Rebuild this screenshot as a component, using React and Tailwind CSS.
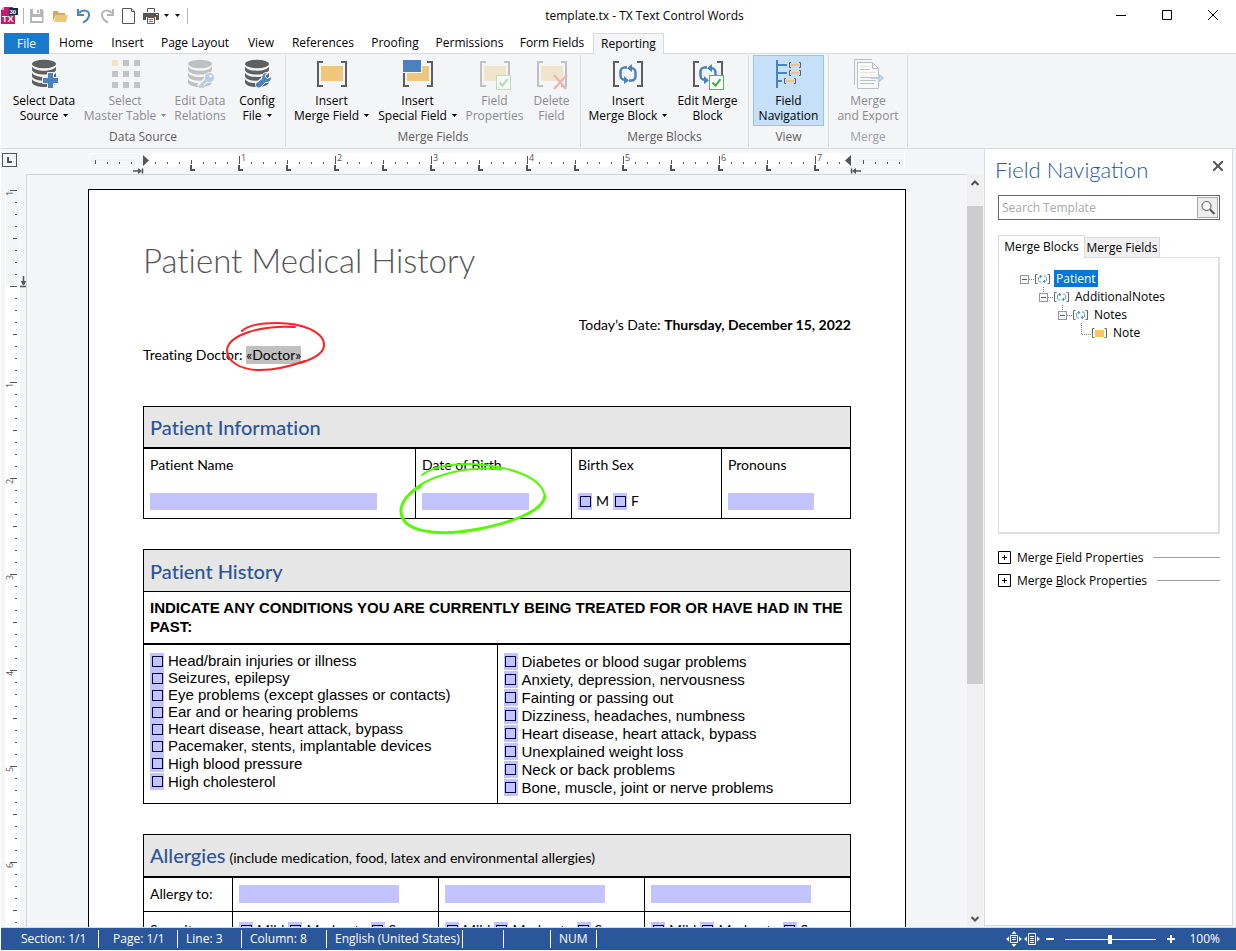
import React from 'react';

const uiFont = "font-['Open_Sans','Noto_Sans',sans-serif]";
const docFont = "font-['Lato','Open_Sans',sans-serif] [font-variant-ligatures:none]";

/* ---------- ribbon icons ---------- */

const Svg = ({ children, faded }) => (
  <svg width="32" height="32" viewBox="0 0 32 32" className={faded ? 'opacity-35' : ''} aria-hidden="true">
    {children}
  </svg>
);

const Database = () => (
  <g fill="#5f5f5f">
    <ellipse cx="16" cy="6" rx="12" ry="4.2" />
    <path d="M4 8.5c2 3.4 7 4.2 12 4.2s10-.8 12-4.2v3.8c-1.500 3.200-7 4.300-12 4.300s-10.500-1.100-12-4.300z" />
    <path d="M4 14.700c2 3.400 7 4.200 12 4.200s10-.8 12-4.200v3.800c-1.500 3.200-7 4.300-12 4.300s-10.500-1.100-12-4.300z" />
    <path d="M4 20.900c2 3.400 7 4.200 12 4.200s10-.8 12-4.200v3.800c-1.500 3.200-7 4.300-12 4.300s-10.500-1.100-12-4.300z" />
  </g>
);

const Brackets = () => (
  <path d="M7 4H2v24h5M25 4h5v24h-5" fill="none" stroke="#5f5f5f" strokeWidth="2" />
);

const CheckBadge = () => (
  <g>
    <rect x="17.500" y="17.500" width="14" height="14" fill="#fff" stroke="#58b553" />
    <path d="M20.500 24.500l3 3.200 5-6.500" fill="none" stroke="#3fae3a" strokeWidth="2" />
  </g>
);

const LoopArrows = () => (
  <g fill="none" stroke="#4a82bd" strokeWidth="2.500">
    <path d="M15 9.500h-2.500a4 4 0 0 0-4 4v4a4.500 4.500 0 0 0 4.500 4.500" />
    <path d="M17 22.500h2.500a4 4 0 0 0 4-4v-4a4.500 4.500 0 0 0-4.500-4.500" />
    <path d="M12 18v8l5-3.600zM20 6v8l-5-3.800z" fill="#4a82bd" stroke="none" />
  </g>
);

const SelectDataIcon = () => (
  <Svg>
    <Database />
    <path d="M19.500 14.500h6v5h5v6h-5v5h-6v-5h-5v-6h5z" fill="#4a82bd" stroke="#f4f5f7" />
  </Svg>
);

const TableIcon = () => (
  <Svg>
    {[2, 13, 24].map((y) =>
      [3, 14, 25].map((x) => (
        <rect key={`${x}-${y}`} x={x} y={y} width="6" height="6" fill={x === 3 && y === 2 ? '#f3e4c5' : '#c2c3c5'} />
      ))
    )}
  </Svg>
);

const RelationsIcon = () => (
  <Svg faded>
    <Database />
    <path d="M15 29l8-8" stroke="#f4f5f7" strokeWidth="6" />
    <circle cx="25.500" cy="19.500" r="5" fill="#4a82bd" stroke="#f4f5f7" />
    <path d="M15 29.500l8-8M17 27l3 2.500" stroke="#4a82bd" strokeWidth="2.500" />
    <circle cx="26.500" cy="18" r="1.500" fill="#fff" />
  </Svg>
);

const ConfigIcon = () => (
  <Svg>
    <Database />
    <path d="M16 28l9-8" stroke="#f4f5f7" strokeWidth="7" />
    <path
      d="M15 28.500c-1.500-2 0-3.500 1.500-4.500l4.500-3.500c-.8-3 1.500-6.500 5.500-6l-2.500 3.500 2 2.500 4.500-2c.5 4-2.500 6.500-6 6l-4.500 4.500c-1.800 1.600-3.700 1.200-5-.5z"
      fill="#4a82bd"
      stroke="#f4f5f7"
    />
  </Svg>
);

const MergeFieldIcon = () => (
  <Svg>
    <Brackets />
    <rect x="5" y="8" width="22" height="15" fill="#eec77d" />
  </Svg>
);

const SpecialFieldIcon = () => (
  <Svg>
    <path d="M7 28H2V15M25 4h5v24h-5" fill="none" stroke="#5f5f5f" strokeWidth="2" />
    <rect x="5" y="8" width="22" height="15" fill="#eec77d" />
    <rect x="0" y="1" width="20" height="14" fill="#f4f5f7" />
    <rect x="1" y="2" width="18" height="12" fill="#4a82bd" />
  </Svg>
);

const FieldPropsIcon = () => (
  <Svg faded>
    <Brackets />
    <rect x="5" y="8" width="22" height="15" fill="#eec77d" />
    <CheckBadge />
  </Svg>
);

const DeleteFieldIcon = () => (
  <Svg faded>
    <Brackets />
    <rect x="5" y="8" width="22" height="15" fill="#eec77d" />
    <path d="M18 17l12 14M31 17L18 31" stroke="#e0452f" strokeWidth="2.500" />
  </Svg>
);

const MergeBlockIcon = () => (
  <Svg>
    <Brackets />
    <LoopArrows />
  </Svg>
);

const EditBlockIcon = () => (
  <Svg>
    <Brackets />
    <LoopArrows />
    <CheckBadge />
  </Svg>
);

const NavigationIcon = () => (
  <Svg>
    <path d="M4 2v28M5 7h9M5 15h9M5 23h4" fill="none" stroke="#4a82bd" strokeWidth="2" />
    <path
      d="M18 4.500h-1.500v5H18M26 4.500h1.500v5H26M18 12.500h-1.500v5H18M26 12.500h1.500v5H26M13 20.500h-1.500v5H13M21 20.500h1.500v5H21"
      fill="none"
      stroke="#5f5f5f"
    />
    <path d="M18 7h8M18 15h8M13 23h8" stroke="#eec77d" strokeWidth="2" />
  </Svg>
);

const ExportIcon = () => (
  <Svg faded>
    <path d="M2.500 27V1.500H20" fill="none" stroke="#5f5f5f" />
    <path d="M5.500 4.500h15l6 6v20h-21z" fill="#fff" stroke="#5f5f5f" />
    <path d="M20.500 4.500v6h6" fill="none" stroke="#5f5f5f" />
    <path d="M8 11.500h10M8 19.500h16M8 22.500h16M8 25.500h14" stroke="#5f5f5f" />
    <path d="M8 8.500h10M8 14.500h16" stroke="#eec77d" />
    <path d="M19 20h9M26 16l4.500 4-4.500 4" fill="none" stroke="#4a82bd" strokeWidth="2" />
  </Svg>
);

const Caret = () => (
  <svg width="5" height="3" viewBox="0 0 5 3" className="ml-[5px] shrink-0" aria-hidden="true">
    <path d="M0 0h5L2.500 3z" fill="currentColor" />
  </svg>
);

/* ---------- ribbon data ---------- */

const tabs = [
  { name: 'Home', width: 'w-[54px]' },
  { name: 'Insert', width: 'w-[49px]' },
  { name: 'Page Layout', width: 'w-[86px]' },
  { name: 'View', width: 'w-[46px]' },
  { name: 'References', width: 'w-[78px]' },
  { name: 'Proofing', width: 'w-[66px]' },
  { name: 'Permissions', width: 'w-[83px]' },
  { name: 'Form Fields', width: 'w-[82px]' },
];

const groups = [
  {
    label: 'Data Source',
    items: [
      { lines: ['Select Data', 'Source'], icon: SelectDataIcon, menu: true, width: 'w-[78px]' },
      { lines: ['Select', 'Master Table'], icon: TableIcon, menu: true, disabled: true, width: 'w-[84px]' },
      { lines: ['Edit Data', 'Relations'], icon: RelationsIcon, disabled: true, width: 'w-[66px]' },
      { lines: ['Config', 'File'], icon: ConfigIcon, menu: true, width: 'w-[48px]' },
    ],
  },
  {
    label: 'Merge Fields',
    items: [
      { lines: ['Insert', 'Merge Field'], icon: MergeFieldIcon, menu: true, width: 'w-[83px]' },
      { lines: ['Insert', 'Special Field'], icon: SpecialFieldIcon, menu: true, width: 'w-[89px]' },
      { lines: ['Field', 'Properties'], icon: FieldPropsIcon, disabled: true, width: 'w-[65px]' },
      { lines: ['Delete', 'Field'], icon: DeleteFieldIcon, disabled: true, width: 'w-[49px]' },
    ],
  },
  {
    label: 'Merge Blocks',
    items: [
      { lines: ['Insert', 'Merge Block'], icon: MergeBlockIcon, menu: true, width: 'w-[86px]' },
      { lines: ['Edit Merge', 'Block'], icon: EditBlockIcon, width: 'w-[73px]' },
    ],
  },
  {
    label: 'View',
    items: [{ lines: ['Field', 'Navigation'], icon: NavigationIcon, active: true, width: 'w-[71px]' }],
  },
  {
    label: 'Merge',
    disabled: true,
    items: [{ lines: ['Merge', 'and Export'], icon: ExportIcon, disabled: true, width: 'w-[70px]' }],
  },
];

const RibbonButton = ({ item }) => {
  const Icon = item.icon;
  return (
    <button
      type="button"
      disabled={item.disabled}
      className={`flex h-[71px] flex-col items-center border pt-[2px] text-xs leading-[15px] whitespace-nowrap ${item.width} ${
        item.active ? 'border-[#92c6f2] bg-[#c5e0f8]' : 'border-transparent'
      } ${item.disabled ? 'text-[#8b8c8e]' : 'text-black'}`}
    >
      <Icon />
      <span className="mt-[3px]">{item.lines[0]}</span>
      <span className="flex items-center">
        {item.lines[1]}
        {item.menu && <Caret />}
      </span>
    </button>
  );
};

const Ribbon = () => (
  <div className="flex h-[95px] shrink-0 border-b border-[#d9dadc] bg-[#f4f5f7]">
    {groups.map((group) => (
      <section key={group.label} className="my-px flex flex-col border-r border-[#d9dadc] px-1">
        <div className="flex">
          {group.items.map((item) => (
            <RibbonButton key={item.lines.join(' ')} item={item} />
          ))}
        </div>
        <h2 className={`mt-[3px] text-center text-xs leading-4 ${group.disabled ? 'text-[#a0a1a3]' : 'text-[#5c5d5f]'}`}>
          {group.label}
        </h2>
      </section>
    ))}
  </div>
);

/* ---------- title bar ---------- */

const TitleBar = () => (
  <header className="relative flex h-[33px] shrink-0 items-center justify-between pb-[2px]">
    <div className="flex items-center">
      <svg width="17" height="17" viewBox="0 0 17 17" aria-label="TX Text Control">
        <path d="M0 3l3-3h9v17H0z" fill="#c8186f" />
        <path d="M9 7h5v10H9z" fill="#c8186f" />
        <path d="M0 3h3V0z" fill="#f3a3c8" />
        <rect x="8" y="1" width="9" height="7" fill="#14294f" />
        <text x="8.500" y="7" fontSize="6" fontWeight="700" fill="#fff" fontFamily="Liberation Sans, sans-serif">30</text>
        <text x="1" y="15" fontSize="9" fontWeight="700" fill="#fff" fontFamily="Liberation Sans, sans-serif">TX</text>
      </svg>
      <span className="ml-[5px] h-4 w-px bg-[#b5b5b5]" />
      <button type="button" aria-label="Save" className="ml-[6px]">
        <svg width="14" height="14" viewBox="0 0 14 14">
          <path d="M0 0h12l1.500 1.500V14H0z" fill="#b5b5b5" />
          <path d="M3 0h7v5H3zM2 8h10v4H2z" fill="#fff" />
          <path d="M7 1h2v3H7z" fill="#b5b5b5" />
        </svg>
      </button>
      <button type="button" aria-label="Open" className="ml-[9px]">
        <svg width="15" height="14" viewBox="0 0 15 14">
          <path d="M0 12V2h5l1 2h6v2H3z" fill="#d3a861" />
          <path d="M3 6h12l-2 7H1z" fill="#eec77d" />
        </svg>
      </button>
      <button type="button" aria-label="Undo" className="ml-[9px]">
        <svg width="14" height="16" viewBox="0 0 14 16" fill="none" stroke="#4a82bd" strokeWidth="2">
          <path d="M2 5c4-4 10-3 10 2 0 4-3 6-6 7.500" />
          <path d="M1 1v6h6" />
        </svg>
      </button>
      <button type="button" aria-label="Redo" className="ml-[9px]">
        <svg width="14" height="16" viewBox="0 0 14 16" fill="none" stroke="#b5b5b5" strokeWidth="2">
          <path d="M12 5C8 1 2 2 2 7c0 4 3 6 6 7.500" />
          <path d="M13 1v6H7" />
        </svg>
      </button>
      <button type="button" aria-label="New" className="ml-2">
        <svg width="13" height="16" viewBox="0 0 13 16" fill="#fff" stroke="#555">
          <path d="M.5.5h9l3 3v12H.5z" />
          <path d="M9.500.5v3h3" />
        </svg>
      </button>
      <button type="button" aria-label="Print" className="ml-2 flex items-center">
        <svg width="16" height="16" viewBox="0 0 16 16">
          <path d="M0 5h16v7h-3V9H3v3H0z" fill="#555" />
          <path d="M4.500 4V.5h7V4M4.500 9.500v6h7v-6z" fill="#fff" stroke="#555" />
          <path d="M6 11.500h4M6 13.500h4" stroke="#4a82bd" />
          <path d="M13 6h2v1h-2z" fill="#fff" />
        </svg>
        <Caret />
      </button>
      <button type="button" aria-label="Customize toolbar" className="flex pl-px">
        <Caret />
      </button>
      <span className="ml-[7px] h-4 w-px bg-[#b5b5b5]" />
    </div>
    <h1 className="absolute inset-x-0 pl-[52px] text-center text-xs">template.tx - TX Text Control Words</h1>
    <div className="relative flex">
      <button type="button" aria-label="Minimize" className="flex h-[30px] w-[46px] items-center justify-center">
        <svg width="11" height="11" viewBox="0 0 11 11" stroke="#000"><path d="M0 5.500h10" /></svg>
      </button>
      <button type="button" aria-label="Maximize" className="flex h-[30px] w-[46px] items-center justify-center">
        <svg width="11" height="11" viewBox="0 0 11 11" stroke="#000" fill="none"><path d="M.5.5h9v9h-9z" /></svg>
      </button>
      <button type="button" aria-label="Close" className="flex h-[30px] w-[46px] items-center justify-center">
        <svg width="11" height="11" viewBox="0 0 11 11" stroke="#000"><path d="M0 0l10 10M10 0L0 10" /></svg>
      </button>
    </div>
  </header>
);

const TabStrip = () => (
  <nav className="flex h-[21px] shrink-0 text-xs whitespace-nowrap">
    <button type="button" className="ml-[3px] w-[45px] bg-[#1979ca] text-white">File</button>
    {tabs.map((tab) => (
      <button key={tab.name} type="button" className={`border-b border-[#d9dadc] ${tab.width}`}>
        {tab.name}
      </button>
    ))}
    <button type="button" className="w-[71px] border-x border-t border-[#d9dadc] bg-[#f4f5f7]">Reporting</button>
    <span className="flex-1 border-b border-[#d9dadc]" />
  </nav>
);

/* ---------- rulers ---------- */

const HorizontalRuler = () => {
  const ticks = [];
  for (let x = 7, i = -4; x < 815; x += 12, i += 1) {
    if (i === 0 || i === 59) continue;
    if (i % 8 === 0) ticks.push(`M${x}.5 6v8`);
    else if (i % 4 === 0) ticks.push(`M${x}.5 10v4`);
    else ticks.push(`M${x}.5 12v2`);
  }
  const stops = [];
  for (let x = 103; x < 760; x += 48) stops.push(`M${x} 15v5h4`);
  return (
    <svg width="818" height="24" viewBox="0 0 818 24" className="shrink-0" aria-hidden="true">
      <rect x="1" y="3" width="816" height="14" fill="#fff" />
      <rect x="2" y="4" width="53" height="12" fill="#f4f5f7" />
      <rect x="763" y="4" width="53" height="12" fill="#f4f5f7" />
      <path d={ticks.join('')} stroke="#555" />
      <path d={stops.join('')} fill="none" stroke="#555" strokeWidth="2" />
      {[1, 2, 3, 4, 5, 6, 7].map((n) => (
        <text key={n} x={57 + n * 96} y="11" fontSize="9" fill="#555" fontFamily="Open Sans, sans-serif">{n}</text>
      ))}
      <path d="M55 5l6 5.500-6 5.500zM763 5l-6 5.500 6 5.500z" fill="#555" />
      <path d="M45 21h7M54.500 18.500v5M763.500 18.500v5M766 21h7" stroke="#555" strokeWidth="1.500" />
      <path d="M50 18l4 3-4 3zM768 18l-4 3 4 3z" fill="#555" />
    </svg>
  );
};

const VerticalRuler = () => {
  const ticks = [];
  for (let y = 16, i = -8; y < 1000; y += 12, i += 1) {
    if (i % 8 === 0) ticks.push(`M9 ${y}.5h7`);
    else if (i % 4 === 0) ticks.push(`M12 ${y}.5h4`);
    else ticks.push(`M14 ${y}.5h2`);
  }
  return (
    <div className="w-[25px] shrink-0 overflow-hidden">
      <svg width="25" height="1000" viewBox="0 0 25 1000" aria-hidden="true">
        <rect x="4" y="16" width="15" height="984" fill="#fff" />
        <rect x="5" y="16" width="13" height="96" fill="#f4f5f7" />
        <path d={ticks.join('')} stroke="#555" />
        {[-1, 1, 2, 3, 4, 5, 6].map((n) => (
          <text
            key={n}
            transform={`translate(12 ${110 + n * 96 + 8}) rotate(-90)`}
            fontSize="9"
            fill="#555"
            fontFamily="Open Sans, sans-serif"
          >
            {Math.abs(n)}
          </text>
        ))}
        <path d="M22.500 102v9M19 112.500h7" stroke="#555" strokeWidth="1.500" />
        <path d="M19.500 107h6l-3 4.500z" fill="#555" />
      </svg>
    </div>
  );
};

/* ---------- document ---------- */

const leftConditions = [
  'Head/brain injuries or illness',
  'Seizures, epilepsy',
  'Eye problems (except glasses or contacts)',
  'Ear and or hearing problems',
  'Heart disease, heart attack, bypass',
  'Pacemaker, stents, implantable devices',
  'High blood pressure',
  'High cholesterol',
];

const rightConditions = [
  'Diabetes or blood sugar problems',
  'Anxiety, depression, nervousness',
  'Fainting or passing out',
  'Dizziness, headaches, numbness',
  'Heart disease, heart attack, bypass',
  'Unexplained weight loss',
  'Neck or back problems',
  'Bone, muscle, joint or nerve problems',
];

const CheckField = ({ label, className = '' }) => (
  <label className={`flex items-center ${className}`}>
    <span className="mr-1 flex h-[17px] w-[14px] shrink-0 items-center justify-center bg-[#c3c3ff]">
      <input type="checkbox" className="h-[11px] w-[11px] appearance-none border border-[#000040] checked:bg-[#000040]" />
    </span>
    {label}
  </label>
);

const cell = 'border border-black px-[6px] text-left align-top font-normal';
const headCell = 'border border-black bg-[#e6e6e6] px-[6px] text-left text-xl font-medium text-[#2b5597]';

const PatientInformation = () => (
  <table className="mt-[42px] w-full table-fixed border-collapse">
    <colgroup>
      <col className="w-[272px]" />
      <col className="w-[156px]" />
      <col className="w-[150px]" />
      <col />
    </colgroup>
    <thead>
      <tr className="h-[41px]">
        <th colSpan="4" className={`${headCell} border-b-2`}>Patient Information</th>
      </tr>
    </thead>
    <tbody>
      <tr className="h-[71px]">
        <td className={cell}>
          <label htmlFor="patient-name" className="mt-[7px] block">Patient Name</label>
          <input id="patient-name" className="mt-[19px] block h-[17px] w-[227px] bg-[#c3c3ff]" />
        </td>
        <td className={cell}>
          <label htmlFor="birth-date" className="mt-[7px] block">Date of Birth</label>
          <div className="relative mt-[19px]">
            <input id="birth-date" className="block h-[17px] w-[107px] bg-[#c3c3ff]" />
            <svg
              width="150"
              height="76"
              viewBox="0 0 150 76"
              className="pointer-events-none absolute -top-[33px] -left-6 max-w-none"
              fill="none"
              stroke="#59f70a"
              strokeLinecap="round"
              aria-hidden="true"
            >
              <path d="M24 15c12-9 28-11 46-11 40 1 76 13 77 34" strokeWidth="2" />
              <path d="M147 36c-2 16-36 27-66 33-42 8-78 3-78-18 0-9 8-18 20-25" strokeWidth="3" />
              <path d="M10 36C22 19 62 5 103 9.500" strokeWidth="2" />
            </svg>
          </div>
        </td>
        <td className={cell}>
          <p className="mt-[7px]">Birth Sex</p>
          <div className="mt-[19px] flex gap-1">
            <CheckField label="M" className="h-[17px]" />
            <CheckField label="F" className="h-[17px]" />
          </div>
        </td>
        <td className={cell}>
          <label htmlFor="pronouns" className="mt-[7px] block">Pronouns</label>
          <input id="pronouns" className="mt-[19px] block h-[17px] w-[86px] bg-[#c3c3ff]" />
        </td>
      </tr>
    </tbody>
  </table>
);

const PatientHistory = () => (
  <table className="mt-[30px] w-full table-fixed border-collapse">
    <thead>
      <tr className="h-[42px]">
        <th colSpan="2" className={headCell}>Patient History</th>
      </tr>
    </thead>
    <tbody className="font-['Liberation_Sans',Arial,sans-serif] text-[15px]">
      <tr className="h-[52px]">
        <th colSpan="2" className="border border-b-2 border-black px-[6px] pt-[6px] text-left align-top leading-[19px] font-bold">
          INDICATE ANY CONDITIONS YOU ARE CURRENTLY BEING TREATED FOR OR HAVE HAD IN THE PAST:
        </th>
      </tr>
      <tr className="h-40">
        <td className={`${cell} pt-2`}>
          {leftConditions.map((name, i) => (
            <CheckField key={name} label={name} className={i < 6 ? 'h-[17px]' : 'h-[18px]'} />
          ))}
        </td>
        <td className={`${cell} pt-2`}>
          {rightConditions.map((name) => (
            <CheckField key={name} label={name} className="h-[18px]" />
          ))}
        </td>
      </tr>
    </tbody>
  </table>
);

const Allergies = () => (
  <table className="mt-[30px] w-full table-fixed border-collapse">
    <colgroup>
      <col className="w-[89px]" />
      <col className="w-[206px]" />
      <col className="w-[206px]" />
      <col />
    </colgroup>
    <thead>
      <tr className="h-[42px]">
        <th colSpan="4" className={`${headCell} border-b-2`}>
          Allergies
          <span className="ml-1 text-sm font-normal text-black">
            (include medication, food, latex and environmental allergies)
          </span>
        </th>
      </tr>
    </thead>
    <tbody>
      <tr className="h-[35px]">
        <th className={`${cell} pt-[7px]`}>Allergy to:</th>
        {[1, 2, 3].map((n) => (
          <td key={n} className={`${cell} pt-[7px]`}>
            <input aria-label={`Allergy ${n}`} className="block h-[18px] w-[160px] bg-[#c3c3ff]" />
          </td>
        ))}
      </tr>
      <tr className="h-[35px]">
        <th className={`${cell} pt-[9px]`}>Severity:</th>
        {[1, 2, 3].map((n) => (
          <td key={n} className={`${cell} pt-[9px]`}>
            <div className="flex gap-1">
              <CheckField label="Mild" />
              <CheckField label="Moderate" />
              <CheckField label="Severe" />
            </div>
          </td>
        ))}
      </tr>
    </tbody>
  </table>
);

const DocumentPage = () => (
  <article className={`mx-auto mt-[14px] w-[818px] border border-black bg-white px-[54px] pb-24 text-sm leading-[18px] ${docFont}`}>
    <h1 className="pt-[46px] text-[33px] leading-[48px] font-light text-[#555]">Patient Medical History</h1>
    <p className="mt-8 text-right">
      Today’s Date: <b>Thursday, December 15, 2022</b>
    </p>
    <p className="mt-3">
      Treating Doctor:{' '}
      <span className="relative inline-block bg-[#c0c0c0]">
        «Doctor»
        <svg
          width="102"
          height="54"
          viewBox="0 0 102 54"
          className="pointer-events-none absolute -top-[26px] -left-[21px] max-w-none"
          fill="none"
          stroke="#fb2323"
          strokeLinecap="round"
          aria-hidden="true"
        >
          <path d="M17 11C23 5 37 3 52 3c26 0 47 9 47 22 0 9-14 15-24 18" strokeWidth="2" />
          <path d="M80 41c-14 5-31 9-45 9-19 0-33-8-33-20C3 16 33 5 70 7" strokeWidth="2" />
        </svg>
      </span>
    </p>
    <PatientInformation />
    <PatientHistory />
    <Allergies />
  </article>
);

const Scrollbar = () => (
  <div className="flex w-[17px] shrink-0 flex-col items-center border-r border-[#f4f5f7] bg-[#f0f0f0]">
    <button type="button" aria-label="Scroll up" className="flex h-8 items-start pt-[6px]">
      <svg width="8" height="6" viewBox="0 0 8 6" fill="none" stroke="#555" strokeWidth="2"><path d="M.5 5L4 1.500 7.500 5" /></svg>
    </button>
    <div className="flex w-full flex-1 flex-col">
      <div className="w-full flex-[477] bg-[#cdcdcd]" />
      <div className="flex-[226]" />
    </div>
    <button type="button" aria-label="Scroll down" className="flex h-4 items-center">
      <svg width="8" height="6" viewBox="0 0 8 6" fill="none" stroke="#555" strokeWidth="2"><path d="M.5 1L4 4.500 7.500 1" /></svg>
    </button>
  </div>
);

const Editor = () => (
  <main className="flex min-w-0 flex-1 flex-col bg-[#f4f5f7]">
    <div className="flex h-[25px] shrink-0 pt-px">
      <button type="button" aria-label="Tab type" className="mt-[3px] ml-px flex h-[14px] w-[15px] items-center justify-center border border-[#555]">
        <svg width="5" height="6" viewBox="0 0 5 6" stroke="#555" strokeWidth="2" fill="none"><path d="M1 0v5h4" /></svg>
      </button>
      <div className="ml-[10px] flex flex-1 justify-center overflow-hidden">
        <HorizontalRuler />
      </div>
      <div className="w-[17px]" />
    </div>
    <div className="flex min-h-0 flex-1">
      <VerticalRuler />
      <div className="min-w-0 flex-1 overflow-hidden border-t border-l border-[#d3d4d6]">
        <DocumentPage />
      </div>
      <Scrollbar />
    </div>
  </main>
);

/* ---------- field navigation ---------- */

const tree = [
  { name: 'Patient', indent: 'pl-[21px]', block: true, selected: true },
  { name: 'AdditionalNotes', indent: 'pl-[40px]', block: true },
  { name: 'Notes', indent: 'pl-[59px]', block: true },
  { name: 'Note', indent: 'pl-[78px]' },
];

const TreeRow = ({ node, first }) => (
  <li className={`flex h-[18px] items-center ${node.indent}`}>
    <svg width="30" height="18" viewBox="0 0 30 18" className="shrink-0" aria-hidden="true">
      {!first && <path d={node.block ? 'M4.500 0v6' : 'M4.500 0v11.500h11'} fill="none" stroke="#777" strokeDasharray="1 1" />}
      {node.block ? (
        <g>
          <path d="M9 10.500h6" stroke="#777" strokeDasharray="1 1" />
          <rect x=".5" y="6.500" width="8" height="8" fill="#f7f7f7" stroke="#999" />
          <path d="M2 10.500h5" stroke="#3c5fa5" />
          <path d="M21 13c-3 0-2.500-1.500-2.500-3s0-2.500 2-2.500M24 7c3 0 2.500 1.500 2.500 3s0 2.500-2 2.500" fill="none" stroke="#4a9ac7" />
          <path d="M20 5.500v4l2.500-2zM25 10.500v4l-2.500-2z" fill="#4a9ac7" />
        </g>
      ) : (
        <rect x="18" y="7" width="9" height="7" fill="#fbc65a" />
      )}
      <path d="M17.500 5.500h-2v9h2M27.500 5.500h2v9h-2" fill="none" stroke="#666" />
    </svg>
    <span className={`ml-1 px-[2px] leading-[17px] ${node.selected ? 'bg-[#0078d7] text-white' : ''}`}>{node.name}</span>
  </li>
);

const PropertyToggle = ({ before, accessKey, after }) => (
  <div className="flex h-[23px] items-center">
    <button type="button" className="flex items-center whitespace-nowrap">
      <svg width="13" height="13" viewBox="0 0 13 13" fill="none" stroke="#000" aria-hidden="true">
        <path d="M.5.5h12v12H.5zM4 6.500h5M6.500 4v5" />
      </svg>
      <span className="ml-[6px]">
        {before}
        <u>{accessKey}</u>
        {after}
      </span>
    </button>
    <span className="ml-[10px] h-px flex-1 bg-[#a0a0a0]" />
  </div>
);

const FieldNavigation = () => (
  <aside className="flex w-[252px] shrink-0 border-l border-[#d9dadc] bg-[#f4f5f7] pb-px text-xs">
    <div className="flex flex-1 flex-col border-r border-b border-[#d9dadc] bg-white pr-3 pl-[13px]">
      <div className="mt-[7px] flex items-start justify-between">
        <h2 className="-ml-[3px] text-[22px] leading-7 font-light whitespace-nowrap text-[#2b579a] font-['Lato','Open_Sans',sans-serif]">
          Field Navigation
        </h2>
        <button type="button" aria-label="Close pane" className="-mr-[3px] mt-[5px]">
          <svg width="10" height="10" viewBox="0 0 10 10" stroke="#555" strokeWidth="2"><path d="M0 0l10 10M10 0L0 10" /></svg>
        </button>
      </div>
      <form className="mt-[11px] flex h-[25px] items-center border border-[#666] p-px">
        <input
          type="text"
          aria-label="Search Template"
          placeholder="Search Template"
          className="min-w-0 flex-1 pl-[2px] outline-none placeholder:text-[#a8a8a8]"
        />
        <button type="button" aria-label="Search" className="flex h-[21px] w-[21px] items-center justify-center border border-[#aaa] bg-[#eee]">
          <svg width="16" height="16" viewBox="0 0 16 16" fill="#fff" stroke="#555">
            <circle cx="6.500" cy="6" r="4.500" />
            <path d="M10 9.500l4.500 4.500" strokeWidth="2" />
          </svg>
        </button>
      </form>
      <div className="relative mt-[15px] flex items-end whitespace-nowrap" role="tablist">
        <button type="button" role="tab" aria-selected="true" className="relative -mb-px h-[23px] w-[87px] border-x border-t border-[#d9d9d9] bg-white">
          Merge Blocks
        </button>
        <button type="button" role="tab" aria-selected="false" className="h-5 w-[75px] border-t border-r border-[#d9d9d9] bg-[#f0f0f0]">
          Merge Fields
        </button>
      </div>
      <ul className="h-[277px] border border-r-2 border-b-2 border-[#dfdfdf] pt-[11px]">
        {tree.map((node, i) => (
          <TreeRow key={node.name} node={node} first={i === 0} />
        ))}
      </ul>
      <div className="mt-[12px]">
        <PropertyToggle before="Merge " accessKey="F" after="ield Properties" />
        <PropertyToggle before="Merge " accessKey="B" after="lock Properties" />
      </div>
    </div>
    <div className="w-[3px]" />
  </aside>
);

/* ---------- status bar ---------- */

const statusCells = [
  { text: 'Section: 1/1', style: 'w-[98px] pl-5' },
  { text: 'Page: 1/1', style: 'w-[79px] pl-[14px]' },
  { text: 'Line: 3', style: 'w-[64px] pl-2' },
  { text: 'Column: 8', style: 'w-[85px] pl-2' },
  { text: 'English (United States)', style: 'w-[136px] pl-2' },
  { text: '', style: 'w-[41px]' },
  { text: '', style: 'w-[47px]' },
  { text: 'NUM', style: 'w-[46px] pl-2' },
];

const StatusBar = () => (
  <footer className="mb-px flex h-[22px] shrink-0 items-center justify-between bg-[#2b579a] text-xs whitespace-nowrap text-white">
    <div className="flex">
      {statusCells.map((item, i) => (
        <span key={i} className={`h-[18px] border-r border-white leading-[18px] ${item.style}`}>
          {item.text}
        </span>
      ))}
    </div>
    <div className="flex items-center pr-4">
      <button type="button" aria-label="Whole page">
        <svg width="16" height="16" viewBox="0 0 16 16" fill="none" stroke="#fff">
          <path d="M4.500 4.500h7v7h-7zM6 6.500h4M6 8.500h4" />
          <path d="M8 0l2.500 3h-5zM8 16l2.500-3h-5zM0 8l3-2.500v5zM16 8l-3-2.500v5z" fill="#fff" stroke="none" />
        </svg>
      </button>
      <button type="button" aria-label="Page width" className="ml-[2px]">
        <svg width="16" height="16" viewBox="0 0 16 16" fill="none" stroke="#fff">
          <path d="M4.500 2.500h7v11h-7zM6 5.500h4M6 7.500h4M6 9.500h4M6 11.500h4" />
          <path d="M0 8l3-2.500v5zM16 8l-3-2.500v5z" fill="#fff" stroke="none" />
        </svg>
      </button>
      <button type="button" aria-label="Zoom out" className="ml-[6px]">
        <svg width="8" height="8" viewBox="0 0 8 8" stroke="#fff" strokeWidth="2"><path d="M0 4h8" /></svg>
      </button>
      <input
        type="range"
        aria-label="Zoom"
        defaultValue="49"
        className="mx-[11px] h-3 w-[91px] appearance-none bg-[linear-gradient(#fff,#fff)] bg-[length:100%_1px] bg-center bg-no-repeat [&::-webkit-slider-thumb]:h-[9px] [&::-webkit-slider-thumb]:w-1 [&::-webkit-slider-thumb]:appearance-none [&::-webkit-slider-thumb]:bg-white"
      />
      <button type="button" aria-label="Zoom in">
        <svg width="8" height="8" viewBox="0 0 8 8" stroke="#fff" strokeWidth="2"><path d="M0 4h8M4 0v8" /></svg>
      </button>
      <span className="ml-[14px]">100%</span>
    </div>
  </footer>
);

export default function App() {
  return (
    <div className={`flex h-screen flex-col overflow-hidden bg-white pl-px text-black ${uiFont}`}>
      <TitleBar />
      <TabStrip />
      <Ribbon />
      <div className="flex min-h-0 flex-1 border-b border-[#d9dadc]">
        <Editor />
        <FieldNavigation />
      </div>
      <StatusBar />
    </div>
  );
}
